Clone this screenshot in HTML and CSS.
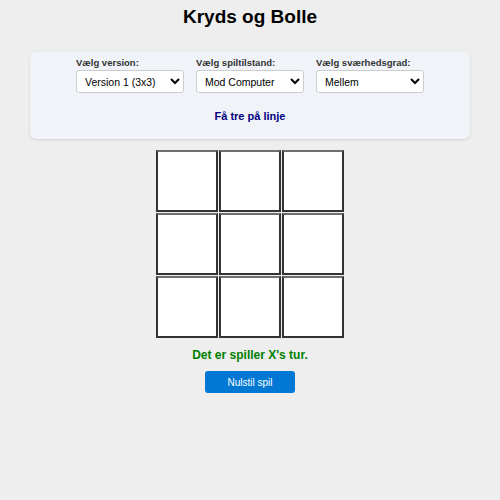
FILE: index.html
```html
<!DOCTYPE html>
<html lang="da">
<head>
<meta charset="utf-8">
<title>Kryds og Bolle</title>
<link rel="stylesheet" href="styles.css">
</head>
<body>
<h1 class="title">Kryds og Bolle</h1>
<div class="panel">
  <div class="controls">
    <div class="group">
      <label class="lbl">Vælg version:</label>
      <select class="sel"><option>Version 1 (3x3)</option></select>
    </div>
    <div class="group">
      <label class="lbl">Vælg spiltilstand:</label>
      <select class="sel"><option>Mod Computer</option></select>
    </div>
    <div class="group">
      <label class="lbl">Vælg sværhedsgrad:</label>
      <select class="sel"><option>Mellem</option></select>
    </div>
  </div>
  <div class="goal">Få tre på linje</div>
</div>
<div class="board">
  <button class="cell"></button><button class="cell"></button><button class="cell"></button>
  <button class="cell"></button><button class="cell"></button><button class="cell"></button>
  <button class="cell"></button><button class="cell"></button><button class="cell"></button>
</div>
<div class="status">Det er spiller X's tur.</div>
<div class="actions"><button class="reset">Nulstil spil</button></div>
</body>
</html>
```
FILE: styles.css
```css
body {
  margin: 0;
  padding: 0 30px;
  background: #eeeeee;
  font-family: "Liberation Sans", Arial, sans-serif;
  color: #000;
}
.title {
  margin: 6px 0 0;
  font-size: 19px;
  line-height: 22px;
  text-align: center;
  font-weight: bold;
}
.panel {
  margin-top: 24px;
  background: #f0f3f8;
  border-radius: 6px;
  box-shadow: 0 1px 3px rgba(0,0,0,0.12);
  padding: 5px 0 17px;
}
.controls {
  display: flex;
  justify-content: center;
  gap: 12px;
}
.group {
  display: flex;
  flex-direction: column;
  width: 108px;
}
.lbl {
  font-size: 9.5px;
  font-weight: bold;
  color: #333;
  line-height: 11px;
  margin-bottom: 2px;
}
.sel {
  width: 108px;
  height: 23px;
  font-family: "Liberation Sans", Arial, sans-serif;
  font-size: 10.5px;
  background: #fff;
  border: 1px solid #ccc;
  border-radius: 3px;
  padding: 0 4px;
  color: #000;
}
.goal {
  margin-top: 17px;
  text-align: center;
  font-size: 11px;
  font-weight: bold;
  color: #000080;
}
.board {
  margin: 11px auto 0;
  display: grid;
  grid-template-columns: repeat(3, 62px);
  grid-auto-rows: 62px;
  gap: 1px;
  width: 188px;
}
.cell {
  box-sizing: border-box;
  background: #fff;
  border: 2px solid #333;
  border-top-color: #6e6e6e;
  padding: 0;
  margin: 0;
}
.status {
  margin-top: 10px;
  text-align: center;
  font-size: 12px;
  font-weight: bold;
  color: #008000;
}
.actions {
  display: flex;
  justify-content: center;
  margin-top: 9px;
}
.reset {
  width: 90px;
  height: 22px;
  background: #0078d4;
  color: #fff;
  border: none;
  border-radius: 3px;
  font-family: "Liberation Sans", Arial, sans-serif;
  font-size: 10px;
}
```
